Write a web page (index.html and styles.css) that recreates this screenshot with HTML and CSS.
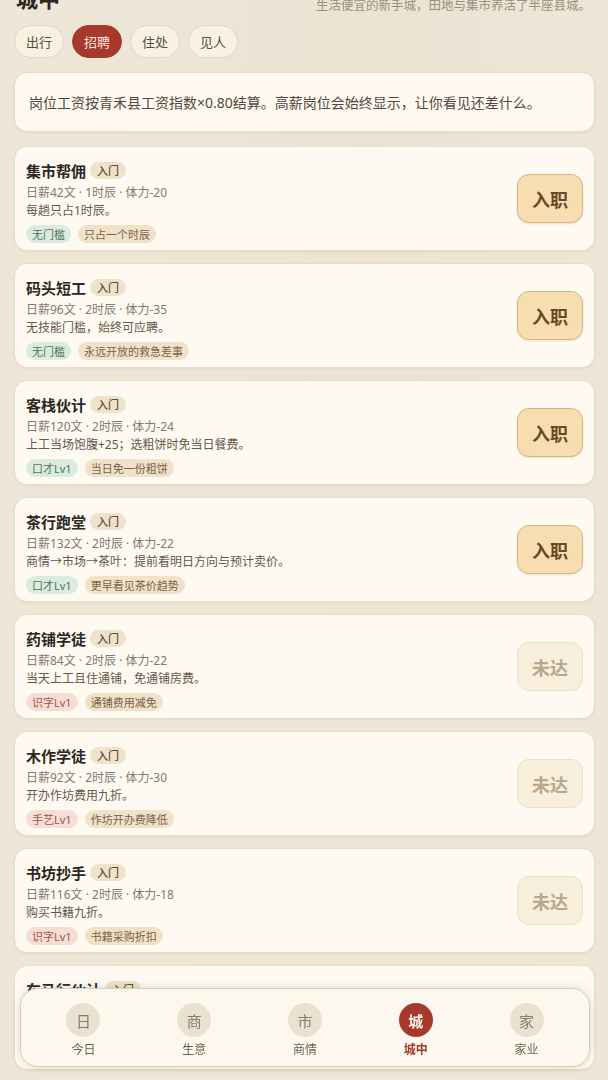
FILE: index.html
```html
<!DOCTYPE html>
<html lang="zh">
<head>
<meta charset="utf-8">
<link rel="stylesheet" href="styles.css">
</head>
<body>
<div class="page">
  <header class="head">
    <h1 class="title">城中</h1>
    <p class="subtitle">生活便宜的新手城，田地与集市养活了半座县城。</p>
  </header>
  <nav class="chips">
    <span class="chip">出行</span>
    <span class="chip active">招聘</span>
    <span class="chip">住处</span>
    <span class="chip">见人</span>
  </nav>
  <div class="info">岗位工资按青禾县工资指数×0.80结算。高薪岗位会始终显示，让你看见还差什么。</div>

  <div class="list">
    <div class="card">
      <div class="body">
        <div class="name">集市帮佣<span class="lvl">入门</span></div>
        <div class="meta">日薪42文 · 1时辰 · 体力-20</div>
        <div class="desc">每趟只占1时辰。</div>
        <div class="tags"><span class="tag green">无门槛</span><span class="tag tan">只占一个时辰</span></div>
      </div>
      <button class="btn">入职</button>
    </div>
    <div class="card">
      <div class="body">
        <div class="name">码头短工<span class="lvl">入门</span></div>
        <div class="meta">日薪96文 · 2时辰 · 体力-35</div>
        <div class="desc">无技能门槛，始终可应聘。</div>
        <div class="tags"><span class="tag green">无门槛</span><span class="tag tan">永远开放的救急差事</span></div>
      </div>
      <button class="btn">入职</button>
    </div>
    <div class="card">
      <div class="body">
        <div class="name">客栈伙计<span class="lvl">入门</span></div>
        <div class="meta">日薪120文 · 2时辰 · 体力-24</div>
        <div class="desc">上工当场饱腹+25；选粗饼时免当日餐费。</div>
        <div class="tags"><span class="tag green">口才Lv1</span><span class="tag tan">当日免一份粗饼</span></div>
      </div>
      <button class="btn">入职</button>
    </div>
    <div class="card">
      <div class="body">
        <div class="name">茶行跑堂<span class="lvl">入门</span></div>
        <div class="meta">日薪132文 · 2时辰 · 体力-22</div>
        <div class="desc">商情→市场→茶叶：提前看明日方向与预计卖价。</div>
        <div class="tags"><span class="tag green">口才Lv1</span><span class="tag tan">更早看见茶价趋势</span></div>
      </div>
      <button class="btn">入职</button>
    </div>
    <div class="card">
      <div class="body">
        <div class="name">药铺学徒<span class="lvl">入门</span></div>
        <div class="meta">日薪84文 · 2时辰 · 体力-22</div>
        <div class="desc">当天上工且住通铺，免通铺房费。</div>
        <div class="tags"><span class="tag red">识字Lv1</span><span class="tag tan">通铺费用减免</span></div>
      </div>
      <button class="btn off">未达</button>
    </div>
    <div class="card">
      <div class="body">
        <div class="name">木作学徒<span class="lvl">入门</span></div>
        <div class="meta">日薪92文 · 2时辰 · 体力-30</div>
        <div class="desc">开办作坊费用九折。</div>
        <div class="tags"><span class="tag red">手艺Lv1</span><span class="tag tan">作坊开办费降低</span></div>
      </div>
      <button class="btn off">未达</button>
    </div>
    <div class="card">
      <div class="body">
        <div class="name">书坊抄手<span class="lvl">入门</span></div>
        <div class="meta">日薪116文 · 2时辰 · 体力-18</div>
        <div class="desc">购买书籍九折。</div>
        <div class="tags"><span class="tag red">识字Lv1</span><span class="tag tan">书籍采购折扣</span></div>
      </div>
      <button class="btn off">未达</button>
    </div>
    <div class="card">
      <div class="body">
        <div class="name">车马行伙计<span class="lvl">入门</span></div>
        <div class="meta">日薪128文 · 2时辰 · 体力-32</div>
        <div class="desc">出行车马费用九折。</div>
        <div class="tags"><span class="tag red">力气Lv1</span><span class="tag tan">车马费折扣</span></div>
      </div>
      <button class="btn off">未达</button>
    </div>
  </div>
</div>

<nav class="tabbar">
  <div class="tab"><span class="ico">日</span><span class="lab">今日</span></div>
  <div class="tab"><span class="ico">商</span><span class="lab">生意</span></div>
  <div class="tab"><span class="ico">市</span><span class="lab">商情</span></div>
  <div class="tab on"><span class="ico">城</span><span class="lab">城中</span></div>
  <div class="tab"><span class="ico">家</span><span class="lab">家业</span></div>
</nav>
</body>
</html>
```
FILE: styles.css
```css
* { box-sizing: border-box; }
html, body { margin: 0; padding: 0; }
body {
  width: 608px;
  height: 1080px;
  overflow: hidden;
  font-family: "Noto Sans", "Noto Sans CJK SC", sans-serif;
  color: #3a2f25;
  background: radial-gradient(ellipse at 60% 10%, #ebe2d2 0%, #ede5d6 40%, #eee7d9 100%);
}
.page {
  padding: 0 13px 0 14px;
  margin-top: -16px;
}
.head {
  display: flex;
  justify-content: space-between;
  align-items: flex-start;
}
.title {
  margin: 0 0 0 2px;
  font-size: 22px;
  line-height: 28px;
  font-weight: 700;
  color: #2e261f;
}
.subtitle {
  margin: 14px 4px 0 0;
  font-size: 12.5px;
  line-height: 16px;
  color: #9c8f80;
}
.chips {
  display: flex;
  gap: 8px;
  margin-top: 11px;
}
.chip {
  display: inline-flex;
  align-items: center;
  justify-content: center;
  width: 50px;
  height: 33px;
  border-radius: 17px;
  border: 1px solid #e2d6c1;
  background: #f8f1e3;
  font-size: 13px;
  color: #5a4c3e;
}
.chip.active {
  background: #a53a2c;
  border-color: #a53a2c;
  color: #fbe6dc;
}
.info {
  margin-top: 14px;
  height: 60px;
  padding: 0 14px;
  display: flex;
  align-items: center;
  background: #fdf9f0;
  border: 1px solid #e6dcc9;
  border-radius: 13px;
  font-size: 14px;
  color: #55483b;
  box-shadow: 0 1px 2px rgba(120, 95, 60, 0.08);
}
.list {
  margin-top: 14px;
  display: flex;
  flex-direction: column;
  gap: 12px;
}
.card {
  display: flex;
  align-items: center;
  justify-content: space-between;
  height: 105px;
  padding: 0 11px;
  background: #fefaf2;
  border: 1px solid #e8dcc7;
  border-radius: 13px;
  box-shadow: 0 1px 2px rgba(120, 95, 60, 0.08);
}
.body { display: flex; flex-direction: column; padding-top: 4px; }
.name {
  display: flex;
  align-items: center;
  gap: 4px;
  font-size: 15px;
  line-height: 24px;
  font-weight: 700;
  color: #2e261f;
}
.lvl {
  display: inline-flex;
  align-items: center;
  height: 17px;
  padding: 0 7px;
  border-radius: 9px;
  background: #efe2ca;
  font-size: 11px;
  font-weight: 500;
  color: #5e4a33;
}
.meta {
  font-size: 12px;
  line-height: 19px;
  color: #85786a;
}
.desc {
  font-size: 12px;
  line-height: 18px;
  color: #665848;
}
.tags {
  display: flex;
  gap: 7px;
  margin-top: 5px;
}
.tag {
  display: inline-flex;
  align-items: center;
  height: 18px;
  padding: 0 6px;
  border-radius: 9px;
  font-size: 11px;
}
.tag.green { background: #dcebdf; color: #4a7559; }
.tag.tan { background: #f0e2c9; color: #7b6147; }
.tag.red { background: #f6ddd6; color: #a0554a; }
.btn {
  width: 66px;
  height: 49px;
  border-radius: 12px;
  border: 1px solid #d6b680;
  background: #f6deb0;
  font-family: inherit;
  font-size: 18px;
  font-weight: 700;
  color: #6a4820;
  box-shadow: 0 1px 2px rgba(120, 90, 40, 0.15);
}
.btn.off {
  border-color: #eddfc3;
  background: #f8eedc;
  color: #b9a789;
  box-shadow: none;
}
.tabbar {
  position: fixed;
  left: 20px;
  right: 18px;
  bottom: 13px;
  height: 79px;
  display: grid;
  grid-template-columns: repeat(5, 1fr);
  padding: 0 7px;
  background: #fdf8ee;
  border: 1px solid #dacdb6;
  border-radius: 18px;
  box-shadow: 0 -2px 10px rgba(120, 95, 60, 0.12), 0 2px 6px rgba(120, 95, 60, 0.12);
}
.tab {
  display: flex;
  flex-direction: column;
  align-items: center;
  padding-top: 14px;
  gap: 4px;
}
.ico {
  display: flex;
  align-items: center;
  justify-content: center;
  width: 34px;
  height: 34px;
  border-radius: 50%;
  background: #ebe1d1;
  font-size: 15px;
  color: #8a7c6c;
}
.lab {
  font-size: 12px;
  line-height: 18px;
  color: #6c5f51;
}
.tab.on .ico {
  background: #a6392b;
  color: #fff3ea;
  font-weight: 700;
}
.tab.on .lab { color: #a6392b; font-weight: 700; }
```
